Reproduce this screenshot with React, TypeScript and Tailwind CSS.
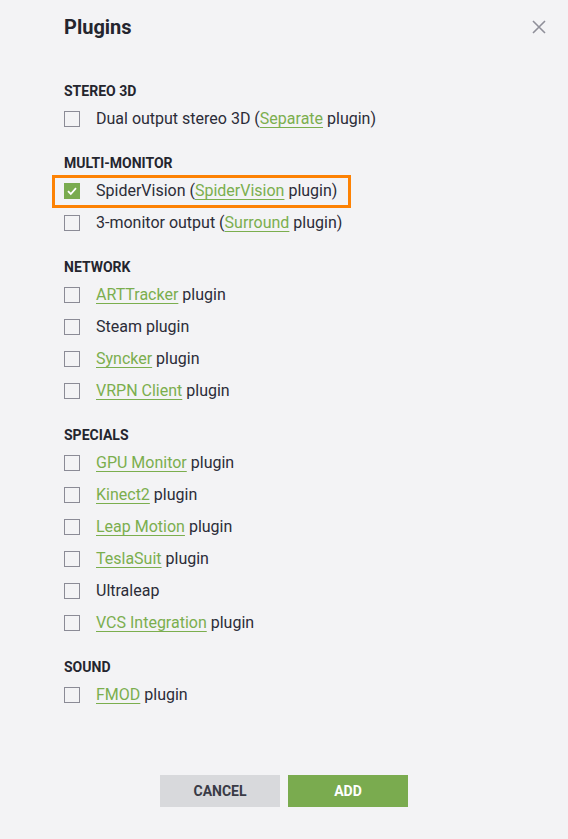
import React from 'react'

type Item = { pre?: string; link?: string; post?: string; checked?: boolean; highlight?: boolean }
type Section = { title: string; items: Item[] }

const sections: Section[] = [
  { title: 'STEREO 3D', items: [{ pre: 'Dual output stereo 3D (', link: 'Separate', post: ' plugin)' }] },
  {
    title: 'MULTI-MONITOR',
    items: [
      { pre: 'SpiderVision (', link: 'SpiderVision', post: ' plugin)', checked: true, highlight: true },
      { pre: '3-monitor output (', link: 'Surround', post: ' plugin)' },
    ],
  },
  {
    title: 'NETWORK',
    items: [
      { link: 'ARTTracker', post: ' plugin' },
      { pre: 'Steam plugin' },
      { link: 'Syncker', post: ' plugin' },
      { link: 'VRPN Client', post: ' plugin' },
    ],
  },
  {
    title: 'SPECIALS',
    items: [
      { link: 'GPU Monitor', post: ' plugin' },
      { link: 'Kinect2', post: ' plugin' },
      { link: 'Leap Motion', post: ' plugin' },
      { link: 'TeslaSuit', post: ' plugin' },
      { pre: 'Ultraleap' },
      { link: 'VCS Integration', post: ' plugin' },
    ],
  },
  { title: 'SOUND', items: [{ link: 'FMOD', post: ' plugin' }] },
]

function Row({ item }: { item: Item }) {
  return (
    <div className="relative flex items-center h-[32px]">
      {item.highlight && (
        <span className="absolute left-[-12px] top-0 w-[299px] h-[33px] border-[3px] border-[#fd8204]" />
      )}
      {item.checked ? (
        <span className="w-[16px] h-[16px] bg-[#7aab4f] flex items-center justify-center">
          <svg width="12" height="12" viewBox="0 0 12 12">
            <path d="M2 6.2 L4.8 9 L10 3.2" fill="none" stroke="#fff" strokeWidth="1.8" />
          </svg>
        </span>
      ) : (
        <span className="w-[16px] h-[16px] border border-[#8b8b96] bg-[#f3f3f5]" />
      )}
      <span className="ml-[16px] text-[16px] text-[#2b2c38]">
        {item.pre}
        {item.link && (
          <span className="text-[#7bae4e] underline underline-offset-[3px] decoration-[1px]">{item.link}</span>
        )}
        {item.post}
      </span>
    </div>
  )
}

export default function App() {
  return (
    <div className="w-[568px] h-[839px] bg-[#f3f3f5] flex flex-col font-['Roboto',sans-serif] text-[#2b2c38]">
      <div className="flex items-center justify-between pl-[64px] pr-[22px] h-[54px]">
        <div className="text-[20px] font-bold text-[#24252e]">Plugins</div>
        <svg width="14" height="14" viewBox="0 0 14 14">
          <path d="M1 1 L13 13 M13 1 L1 13" stroke="#8f8f99" strokeWidth="1.6" />
        </svg>
      </div>

      <div className="pl-[64px] pt-[27px]">
        {sections.map((s, i) => (
          <div key={s.title} className={i === 0 ? '' : 'mt-[18px]'}>
            <div className="h-[20px] leading-[20px] text-[14px] font-bold mb-[2px] text-[#24252e]">{s.title}</div>
            {s.items.map((it, j) => (
              <Row key={j} item={it} />
            ))}
          </div>
        ))}
      </div>

      <div className="mt-auto mb-[32px] flex justify-center gap-[8px]">
        <button className="w-[120px] h-[32px] bg-[#d8d9dc] text-[14px] font-bold text-[#3a3b46]">CANCEL</button>
        <button className="w-[120px] h-[32px] bg-[#7aab4f] text-[14px] font-bold text-white">ADD</button>
      </div>
    </div>
  )
}
